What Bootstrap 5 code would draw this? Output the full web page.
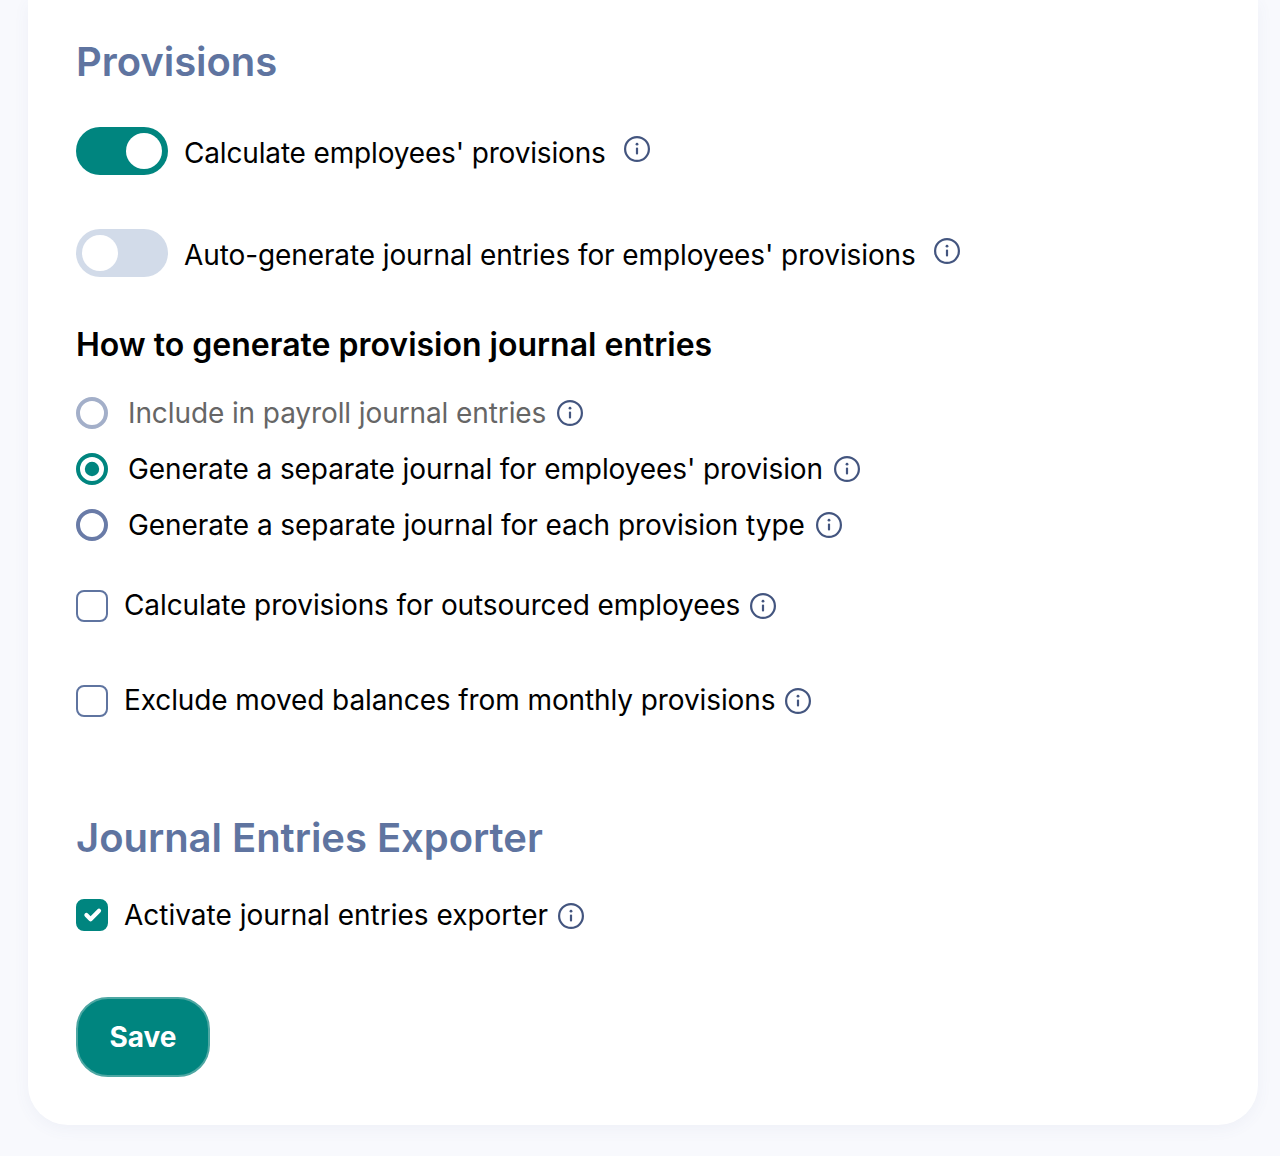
<!DOCTYPE html>
<html lang="en">
<head>
  <meta charset="UTF-8" />
  <meta name="viewport" content="width=device-width, initial-scale=1.0" />
  <title>Provisions settings</title>
  <link href="https://cdn.jsdelivr.net/npm/bootstrap@5.3.0/dist/css/bootstrap.min.css" rel="stylesheet" />
  <style>
    body {
      background-color: #f8f9fd;
      font-family: "Inter", "Liberation Sans", sans-serif;
      color: #000;
      font-size: 28px;
      line-height: 40px;
      letter-spacing: -.1px;
      height: 1156px;
      overflow: hidden;
    }
    .settings-card {
      width: 1230px;
      height: 1125px;
      margin-left: 28px;
      padding: 0 48px;
      background: #fff;
      border-radius: 0 0 40px 40px;
      box-shadow: 0 4px 16px rgba(90, 110, 160, .06);
    }
    .section-title {
      color: #5f74a0;
      font-size: 40px;
      line-height: 48px;
      font-weight: 600;
      letter-spacing: -.04px;
      margin: 0;
    }
    .sub-title {
      font-size: 32px;
      line-height: 40px;
      font-weight: 600;
      letter-spacing: 0;
      margin: 0;
    }
    .opt-row { display: flex; align-items: center; }
    .opt-row .form-check-input { margin: 0; flex-shrink: 0; float: none; }
    .opt-row .form-check-label { white-space: nowrap; }
    .info-ico { width: 28px; height: 28px; flex-shrink: 0; color: #43557f; }

    .switch-row { height: 48px; gap: 16px; padding: 0; margin: 0; }
    .switch-row .form-check-label { padding-top: 4px; }
    .switch-row .form-check-input {
      width: 92px;
      height: 48px;
      margin: 0;
      border: 0;
      background-color: #d2dbe9;
      background-image: url("data:image/svg+xml,%3csvg xmlns='http://www.w3.org/2000/svg' viewBox='-4 -4 8 8'%3e%3ccircle r='3' fill='%23fff'/%3e%3c/svg%3e");
    }
    .switch-row .form-check-input:checked { background-color: #00857f; }

    .radio-row { height: 40px; gap: 20px; padding: 0; margin: 0; }
    .radio-row .form-check-input {
      width: 32px;
      height: 32px;
      border: 4px solid #697ba7;
      background-color: #fff;
    }
    .radio-row .form-check-input:checked {
      border-color: #00857f;
      background-color: #fff;
      background-image: url("data:image/svg+xml,%3csvg xmlns='http://www.w3.org/2000/svg' viewBox='-4 -4 8 8'%3e%3ccircle r='2.4' fill='%2300857f'/%3e%3c/svg%3e");
    }
    .radio-row .form-check-input:disabled { border-color: #a3afc9; opacity: 1; }
    .radio-row .form-check-input:disabled ~ .form-check-label { color: #666; opacity: 1; }

    .check-row { height: 40px; gap: 16px; padding: 0; margin: 0; }
    .check-row .form-check-input {
      width: 32px;
      height: 32px;
      border: 2px solid #5f74a0;
      border-radius: 8px;
    }
    .check-row .form-check-input:checked {
      background-color: #00857f;
      border-color: #00857f;
    }
    .check-row .info-ico { margin-left: -7px; margin-top: 2px; }
    .check-row .box-nudge { margin-top: 2px; }
    .plain-track { letter-spacing: 0; }
    .tight-track { letter-spacing: -.16px; }
    .loose-track { letter-spacing: -.06px; }

    .save-btn {
      display: block;
      width: 134px;
      height: 80px;
      padding: 0;
      font-size: 28px;
      font-weight: 700;
      letter-spacing: 0;
      color: #fff;
      background-color: #00857f;
      border: 2px solid #4ea7a3;
      border-radius: 32px;
    }

    .pt-title { padding-top: 38px; }
    .mt-first { margin-top: 41px; }
    .mt-second { margin-top: 54px; }
    .mt-sub { margin-top: 48px; }
    .mt-radio { margin-top: 28px; }
    .mt-radio2 { margin-top: 16px; }
    .mt-check { margin-top: 40px; }
    .mt-check2 { margin-top: 55px; }
    .mt-title2 { margin-top: 94px; }
    .mt-check3 { margin-top: 33px; }
    .mt-save { margin-top: 62px; }
    .gap-switch { margin-left: 1px; margin-top: -5px; }
    .gap-radio { margin-left: -10px; }
  </style>
</head>
<body>

  <svg class="d-none">
    <symbol id="ico-info" viewBox="0 0 28 28">
      <circle cx="14" cy="14" r="11.9" fill="none" stroke="currentColor" stroke-width="2.2"/>
      <circle cx="14" cy="9.2" r="1.4" fill="currentColor"/>
      <rect x="12.9" y="12.4" width="2.2" height="7.2" rx="1" fill="currentColor"/>
    </symbol>
  </svg>

  <div class="settings-card">
    <h2 class="section-title pt-title">Provisions</h2>

    <div class="form-check form-switch opt-row switch-row mt-first">
      <input class="form-check-input" type="checkbox" role="switch" id="calcProv" checked>
      <label class="form-check-label tight-track" for="calcProv">Calculate employees' provisions</label>
      <svg class="info-ico gap-switch"><use href="#ico-info"/></svg>
    </div>

    <div class="form-check form-switch opt-row switch-row mt-second">
      <input class="form-check-input" type="checkbox" role="switch" id="autoGen">
      <label class="form-check-label" for="autoGen">Auto-generate journal entries for employees' provisions</label>
      <svg class="info-ico gap-switch"><use href="#ico-info"/></svg>
    </div>

    <h3 class="sub-title mt-sub">How to generate provision journal entries</h3>

    <div class="form-check opt-row radio-row mt-radio">
      <input class="form-check-input" type="radio" name="genType" id="genInclude" disabled>
      <label class="form-check-label" for="genInclude">Include in payroll journal entries</label>
      <svg class="info-ico gap-radio"><use href="#ico-info"/></svg>
    </div>
    <div class="form-check opt-row radio-row mt-radio2">
      <input class="form-check-input" type="radio" name="genType" id="genSeparate" checked>
      <label class="form-check-label" for="genSeparate">Generate a separate journal for employees' provision</label>
      <svg class="info-ico gap-radio"><use href="#ico-info"/></svg>
    </div>
    <div class="form-check opt-row radio-row mt-radio2">
      <input class="form-check-input" type="radio" name="genType" id="genEach">
      <label class="form-check-label loose-track" for="genEach">Generate a separate journal for each provision type</label>
      <svg class="info-ico gap-radio"><use href="#ico-info"/></svg>
    </div>

    <div class="form-check opt-row check-row mt-check">
      <input class="form-check-input box-nudge" type="checkbox" id="outsourced">
      <label class="form-check-label" for="outsourced">Calculate provisions for outsourced employees</label>
      <svg class="info-ico"><use href="#ico-info"/></svg>
    </div>
    <div class="form-check opt-row check-row mt-check2">
      <input class="form-check-input box-nudge" type="checkbox" id="excludeMoved">
      <label class="form-check-label" for="excludeMoved">Exclude moved balances from monthly provisions</label>
      <svg class="info-ico"><use href="#ico-info"/></svg>
    </div>

    <h2 class="section-title mt-title2">Journal Entries Exporter</h2>

    <div class="form-check opt-row check-row mt-check3">
      <input class="form-check-input" type="checkbox" id="exporter" checked>
      <label class="form-check-label plain-track" for="exporter">Activate journal entries exporter</label>
      <svg class="info-ico"><use href="#ico-info"/></svg>
    </div>

    <button type="button" class="btn save-btn mt-save">Save</button>
  </div>

</body>
</html>
